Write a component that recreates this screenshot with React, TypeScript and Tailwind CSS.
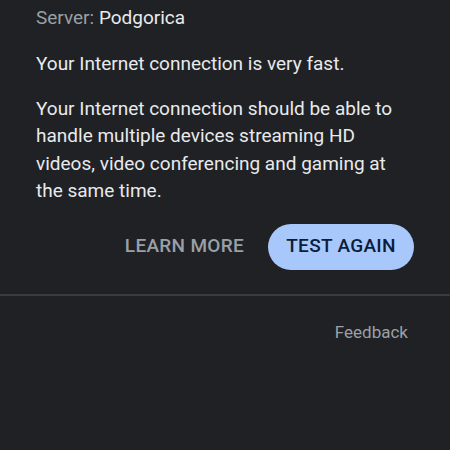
export default function App() {
  return (
    <div
      className="w-[450px] h-[450px] overflow-hidden bg-[#202124] flex flex-col"
      style={{ fontFamily: "Roboto, 'Noto Sans', sans-serif" }}
    >
      <div className="pl-[36px] pr-[36px] mt-[-24px] text-[#e8eaed] text-[19px] leading-[27.5px]">
        <div className="h-[28px] leading-[28px] text-[#e8eaed]">Latency: 12 ms</div>
        <div className="leading-[28px]">
          <span className="text-[#9aa0a6]">Server: </span>
          <span className="text-[#e8eaed]">Podgorica</span>
        </div>
        <p className="mt-[18px]">Your Internet connection is very fast.</p>
        <p className="mt-[17px]">
          Your Internet connection should be able to handle multiple devices streaming HD videos, video conferencing and gaming at the same time.
        </p>
      </div>
      <div className="flex justify-end items-center gap-[24px] pr-[36px] mt-[19px]">
        <button className="text-[#9aa0a6] text-[19px] font-medium tracking-[0.3px]">LEARN MORE</button>
        <button className="h-[46px] w-[146px] rounded-full bg-[#a8c7fa] text-[#0b1d3a] text-[19px] font-medium tracking-[0.3px]">
          TEST AGAIN
        </button>
      </div>
      <div className="mt-[24px] h-[2px] bg-[#3a3b3e]" />
      <div className="flex justify-end pr-[42px] mt-[24px]">
        <span className="text-[#9aa0a6] text-[17px] leading-[24px]">Feedback</span>
      </div>
    </div>
  );
}
